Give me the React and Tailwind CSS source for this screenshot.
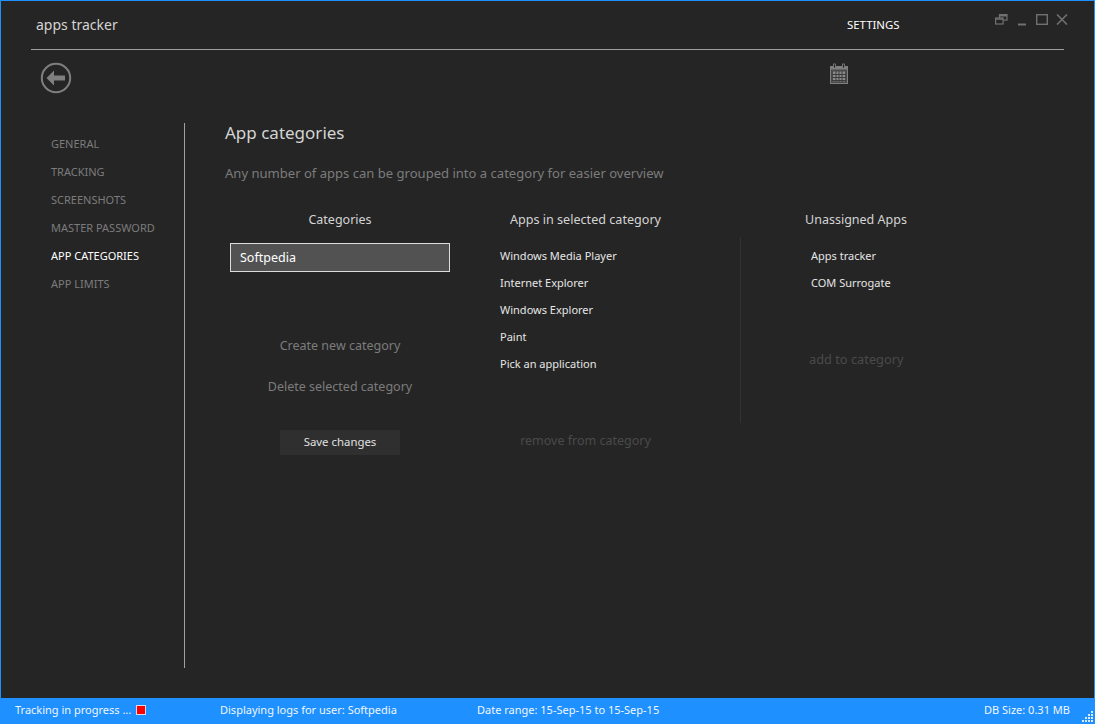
import React from "react";

const font = "font-['Noto_Sans','Open_Sans',sans-serif]";

const navItems = ["GENERAL", "TRACKING", "SCREENSHOTS", "MASTER PASSWORD", "APP CATEGORIES", "APP LIMITS"];
const assigned = ["Windows Media Player", "Internet Explorer", "Windows Explorer", "Paint", "Pick an application"];
const unassigned = ["Apps tracker", "COM Surrogate"];

const BackIcon = () => (
  <svg width="32" height="32" viewBox="0 0 32 32" fill="none">
    <circle cx="16" cy="16" r="14.2" stroke="#7f7f7f" strokeWidth="2" />
    <path d="M6.5 16 L14 8.5 V13.5 H25 V18.5 H14 V23.5 Z" fill="#7f7f7f" />
  </svg>
);

const CalendarIcon = () => (
  <svg width="20" height="22" viewBox="0 0 20 22" fill="none">
    <rect x="1.5" y="3.5" width="17" height="17" fill="#4a4a4a" stroke="#7f7f7f" />
    <rect x="1.5" y="3.5" width="17" height="3" fill="#7f7f7f" />
    <rect x="4.5" y="1" width="2" height="4" fill="#252525" stroke="#7f7f7f" strokeWidth="0.8" />
    <rect x="13.5" y="1" width="2" height="4" fill="#252525" stroke="#7f7f7f" strokeWidth="0.8" />
    <path d="M4 8.5h12v10H4z" fill="#8a8a8a" />
    <path d="M3 11.5h14M3 14.5h14M3 17.5h14M7 8v11M10 8v11M13 8v11" stroke="#3c3c3c" strokeWidth="1" />
  </svg>
);

const WindowButtons = () => (
  <div className="flex items-start gap-[7px] pt-[13px] w-max">
    <svg width="13" height="11" viewBox="0 0 13 11" fill="none" stroke="#707070" strokeWidth="1.2">
      <rect x="4.5" y="0.6" width="7.5" height="5.5" />
      <rect x="0.6" y="4" width="7.5" height="6" fill="#252525" />
      <path d="M0.6 5h7.5M4.5 1.6h7.5" strokeWidth="1.6" />
    </svg>
    <svg width="10" height="12" viewBox="0 0 10 12" className="ml-[2px]">
      <rect x="1" y="9.5" width="8" height="2" fill="#707070" />
    </svg>
    <svg width="12" height="11" viewBox="0 0 12 11" fill="none" stroke="#707070" strokeWidth="1.4" className="ml-[2px]">
      <rect x="0.7" y="0.7" width="10.6" height="9.6" />
    </svg>
    <svg width="12" height="11" viewBox="0 0 12 11" fill="none" stroke="#707070" strokeWidth="1.6" className="ml-[1px]">
      <path d="M1 0.5 L11 10.5 M11 0.5 L1 10.5" />
    </svg>
  </div>
);

const Grip = () => (
  <svg width="12" height="12" viewBox="0 0 12 12" fill="#dce9f7" className="absolute right-[1px] bottom-[1px]">
    <rect x="9" y="0" width="2" height="2" />
    <rect x="6" y="3" width="2" height="2" />
    <rect x="9" y="3" width="2" height="2" />
    <rect x="3" y="6" width="2" height="2" />
    <rect x="6" y="6" width="2" height="2" />
    <rect x="9" y="6" width="2" height="2" />
    <rect x="0" y="9" width="2" height="2" />
    <rect x="3" y="9" width="2" height="2" />
    <rect x="6" y="9" width="2" height="2" />
    <rect x="9" y="9" width="2" height="2" />
  </svg>
);

const App = () => {
  return (
    <div className={`${font} w-[1095px] h-[724px] flex flex-col overflow-hidden bg-[#252525] border-x border-t border-[#1e90ff] text-[#e6e6e6]`}>
      {/* Title bar */}
      <div className="h-[49px] shrink-0 ml-[30px] mr-[30px] flex border-b border-[#a0a0a0]">
        <div className="w-[816px] shrink-0 pl-[5px] pt-[13px] text-[14px] leading-[22px] text-[#d4d4d4]">apps tracker</div>
        <div className="w-[148px] shrink-0 pt-[14px] text-[11.4px] leading-[20px] text-white">SETTINGS</div>
        <div className="flex-1 min-w-0">
          <WindowButtons />
        </div>
      </div>

      {/* Toolbar */}
      <div className="h-[73px] shrink-0 flex">
        <div className="w-[828px] pl-[39px] pt-[12px]">
          <BackIcon />
        </div>
        <div className="pt-[13px]">
          <CalendarIcon />
        </div>
      </div>

      {/* Content */}
      <div className="h-[545px] shrink-0 flex">
        <div className="w-[184px] shrink-0 border-r border-[#a0a0a0] pl-[50px] pt-[7px]">
          {navItems.map((item) => (
            <div
              key={item}
              className={`h-[28px] text-[11px] leading-[28px] whitespace-nowrap ${item === "APP CATEGORIES" ? "text-white" : "text-[#7c7c7c]"}`}
            >
              {item}
            </div>
          ))}
        </div>

        <div className="flex-1 pl-[40px]">
          <h1 className="text-[17px] leading-[22px] text-[#d4d4d4] -mt-[1px]">App categories</h1>
          <p className="mt-[19px] text-[13.06px] leading-[20px] text-[#7c7c7c]">
            Any number of apps can be grouped into a category for easier overview
          </p>

          <div className="flex mt-[27px]">
            {/* Categories */}
            <div className="w-[230px] flex flex-col items-center">
              <div className="text-[12.5px] leading-[20px] text-[#d4d4d4]">Categories</div>
              <div className="mt-[13px] w-[220px] h-[29px] bg-[#525252] border border-[#dcdcdc] pl-[9px] text-[12.5px] leading-[27px] text-white">
                Softpedia
              </div>
              <div className="mt-[64px] text-[12.5px] leading-[20px] text-[#7c7c7c]">Create new category</div>
              <div className="mt-[21px] text-[12.5px] leading-[20px] text-[#7c7c7c]">Delete selected category</div>
              <div className="mt-[33px] w-[120px] h-[25px] bg-[#2f2f2f] text-center text-[11.4px] leading-[24px] text-[#e0e0e0]">
                Save changes
              </div>
            </div>

            {/* Apps in selected category */}
            <div className="w-[285px] pl-[45px] flex flex-col">
              <div className="w-[171px] text-center text-[12.6px] leading-[20px] text-[#d4d4d4] whitespace-nowrap">
                Apps in selected category
              </div>
              <div className="mt-[12px]">
                {assigned.map((app) => (
                  <div key={app} className="h-[27px] text-[11px] leading-[27px] text-[#e6e6e6]">
                    {app}
                  </div>
                ))}
              </div>
              <div className="mt-[54px] w-[171px] text-center text-[12.5px] leading-[20px] text-[#4a4a4a] whitespace-nowrap">
                remove from category
              </div>
            </div>

            {/* Unassigned */}
            <div className="flex-1 flex flex-col">
              <div className="w-[232px] text-center text-[12.5px] leading-[20px] text-[#d4d4d4]">Unassigned Apps</div>
              <div className="mt-[7px] border-l border-[#333333] h-[186px] pl-[70px] pt-[5px]">
                {unassigned.map((app) => (
                  <div key={app} className="h-[27px] text-[11px] leading-[27px] text-[#e6e6e6]">
                    {app}
                  </div>
                ))}
                <div className="mt-[53px] -ml-[2px] text-[12.8px] leading-[20px] text-[#4a4a4a] whitespace-nowrap">add to category</div>
              </div>
            </div>
          </div>
        </div>
      </div>

      <div className="flex-1" />

      {/* Status bar */}
      <div className="relative h-[26px] shrink-0 -mx-px pb-[2px] bg-[#1e90ff] flex items-center text-[11px] text-[#f0f6fd] whitespace-nowrap">
        <div className="w-[220px] pl-[15px] flex items-center">
          <span>Tracking in progress ...</span>
          <span className="ml-[5px] w-[10px] h-[10px] bg-[#ff0000] border border-[#d8d8e8]" />
        </div>
        <div className="w-[257px]">Displaying logs for user: Softpedia</div>
        <div className="w-[507px]">Date range: 15-Sep-15 to 15-Sep-15</div>
        <div>DB Size: 0.31 MB</div>
        <Grip />
      </div>
    </div>
  );
};

export default App;
